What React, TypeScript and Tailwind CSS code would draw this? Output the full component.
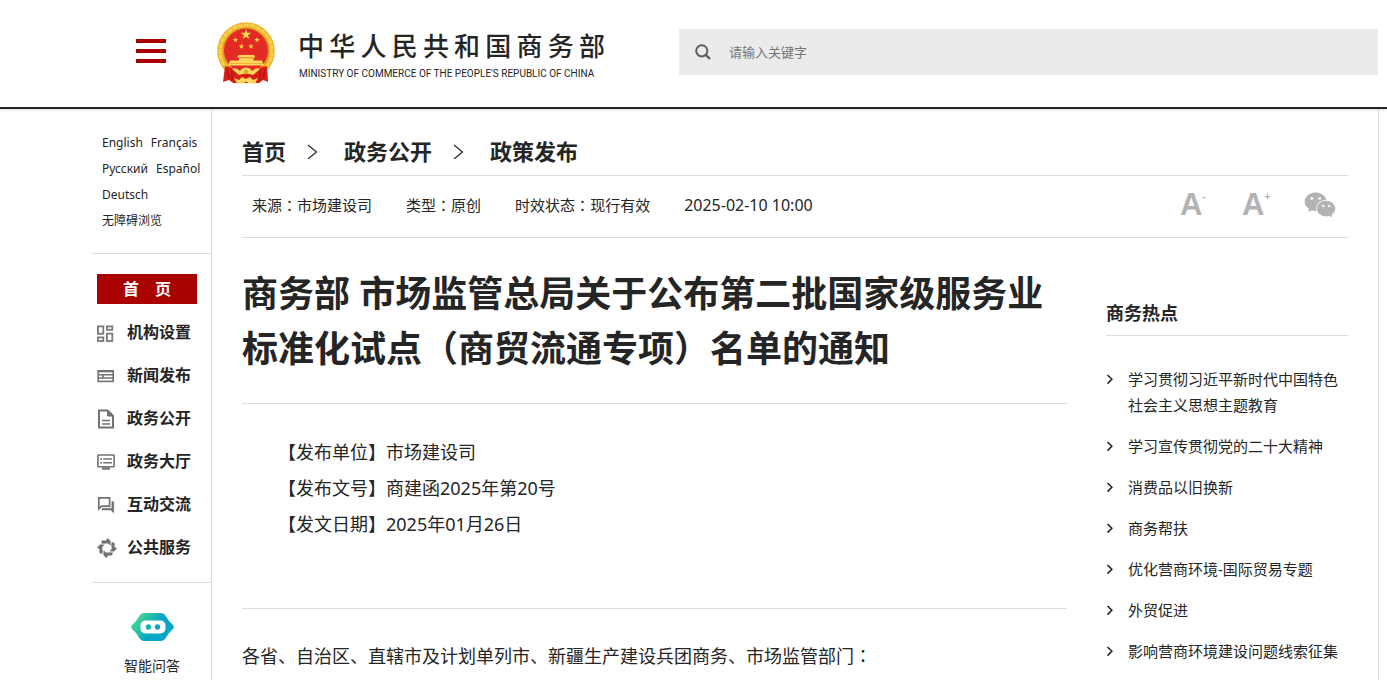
import type { ReactNode } from 'react';
import { FaWeixin } from 'react-icons/fa';

const languages = [
  { label: 'English', link: '#en' },
  { label: 'Français', link: '#fr' },
  { label: 'Русский', link: '#ru' },
  { label: 'Español', link: '#es' },
  { label: 'Deutsch', link: '#de' },
];

const navItems: { label: string; icon: ReactNode }[] = [
  {
    label: '机构设置',
    icon: (
      <svg viewBox="0 0 20 20" className="w-5 h-5" fill="none" stroke="#7a7a7a" strokeWidth="1.8">
        <rect x="0.9" y="3.4" width="5.4" height="7.4" />
        <rect x="9.9" y="3.4" width="5.4" height="3.4" />
        <rect x="0.9" y="14.4" width="5.4" height="3.6" />
        <rect x="9.9" y="10.600" width="5.4" height="7.4" />
      </svg>
    ),
  },
  {
    label: '新闻发布',
    icon: (
      <svg viewBox="0 0 20 20" className="w-5 h-5" fill="none" stroke="#727272" strokeWidth="1.6">
        <rect x="1.2" y="5" width="15" height="10.4" />
        <path d="M0.600 5.2h16.300" strokeWidth="2.2" />
        <path d="M1 8.700h15.5M1 12h15.5M6 8v4" />
      </svg>
    ),
  },
  {
    label: '政务公开',
    icon: (
      <svg viewBox="0 0 20 20" className="w-5 h-5" fill="none" stroke="#727272" strokeWidth="2">
        <path d="M2 1.500h8.5l5.5 5.5V18.500H2z" />
        <path d="M10.5 1V7h6z" fill="#727272" strokeWidth="1" />
        <path d="M5 11.500h8M5 15h8" strokeWidth="1.6" />
      </svg>
    ),
  },
  {
    label: '政务大厅',
    icon: (
      <svg viewBox="0 0 20 20" className="w-5 h-5" fill="none" stroke="#727272" strokeWidth="1.6">
        <rect x="0.9" y="3" width="16.2" height="11.8" rx="0.6" />
        <path d="M3.2 7h1.800M6.200 7H15M3.200 10.700h1.800M6.200 10.700H15" />
        <path d="M5 16.500h8" strokeWidth="2.400" />
      </svg>
    ),
  },
  {
    label: '互动交流',
    icon: (
      <svg viewBox="0 0 20 20" className="w-5 h-5" fill="none" stroke="#727272" strokeWidth="1.7">
        <path d="M1.8 2.800h10.800v8.400H4.600L1.800 13.800z" />
        <path d="M14.800 6.500h2v11.600l-3-3H5V13.200h9.800V6.500z" fill="#727272" strokeWidth="0.400" />
      </svg>
    ),
  },
  {
    label: '公共服务',
    icon: (
      <svg viewBox="0 0 20 20" className="w-5 h-5" fill="#727272">
        {[0, 90, 180, 270].map((angle) => (
          <path
            key={angle}
            transform={`rotate(${angle} 10 10)`}
            d="M10.500 0 L13.600 3 L13.400 7.400 L10.600 5.200 L6.600 5.800 L4 5.200 L5 2.400 L9 2.400Z"
          />
        ))}
      </svg>
    ),
  },
];

const crumbs = ['首页', '政务公开', '政策发布'];

const documentInfo = [
  '【发布单位】市场建设司',
  '【发布文号】商建函2025年第20号',
  '【发文日期】2025年01月26日',
];

const hotTopics = [
  '学习贯彻习近平新时代中国特色社会主义思想主题教育',
  '学习宣传贯彻党的二十大精神',
  '消费品以旧换新',
  '商务帮扶',
  '优化营商环境-国际贸易专题',
  '外贸促进',
  '影响营商环境建设问题线索征集',
];

function Star({ x, y, r }: { x: number; y: number; r: number }) {
  return (
    <path
      transform={`translate(${x} ${y}) scale(${r})`}
      d="M0-1 .23-.31H.95L.37.12.59.81 0 .38-.59.81-.37.12-.95-.31H-.23Z"
      fill="#fbd94a"
    />
  );
}

function Emblem() {
  return (
    <svg viewBox="0 0 58 62" className="w-[58px] h-[62px] shrink-0" aria-hidden="true">
      <circle cx="29" cy="29" r="28.8" fill="#eeb32e" />
      <circle cx="29" cy="29" r="26" fill="none" stroke="#f8cf4c" strokeWidth="3" strokeDasharray="5 1" />
      <circle cx="29" cy="29" r="22.800" fill="none" stroke="#d8921f" strokeWidth="1" />
      <circle cx="29" cy="28.500" r="22" fill="#e32a24" />
      <Star x={29} y={12.500} r={5.600} />
      <Star x={18.500} y={17.800} r={2.900} />
      <Star x={40} y={17.800} r={2.900} />
      <Star x={24.500} y={24.500} r={2.900} />
      <Star x={34} y={24.500} r={2.900} />
      <path d="M21.500 33h15.500l1.500 2.500h-18.500zM22 36h14.500v2.500h8.500l2 5H11l2-5h9z" fill="#fbd75a" />
      <path d="M12 41.500h34M22 35.800h15" stroke="#e6a12c" strokeWidth="0.7" />
      <path d="M8 44 Q15 45 20 49 L25 52 H33 L38 49 Q43 45 50 44 L51 60 L46 58 L42 61 H16 L12 58 L6 60Z" fill="#d91e18" />
      <path d="M10 47 L12 57 M15 48 L15 58 M48 47 L46 57 M43 48 L43 58" stroke="#a81010" strokeWidth="1" />
      <path d="M15 47 Q19 45 23 49 Q25 45.500 29 45.500 Q33 45.500 35 49 Q39 45 43 47 L36 53 L29 51 L22 53Z" fill="#fbd75a" />
      <circle cx="29" cy="49.500" r="2" fill="#e6a12c" />
      <path d="M17 56 L22 58 L25 55 L29 57 L33 55 L36 58 L41 56 L38 61.500 H32 L29 59.500 L26 61.500 H20Z" fill="#fbd75a" />
    </svg>
  );
}

function Robot() {
  return (
    <svg viewBox="0 0 43 28" className="w-[43px] h-7" aria-hidden="true">
      <defs>
        <linearGradient id="robot" x1="0" y1="0" x2="1" y2="0.5">
          <stop offset="0.1" stopColor="#4fdc83" />
          <stop offset="0.65" stopColor="#07a6c8" />
        </linearGradient>
      </defs>
      <path
        d="M13 0H30Q32.500 0 34 2L38 8 42 12Q43.500 14 42 16L38 20 34 26Q32.500 28 30 28H13Q10.500 28 9 26L5 20 1 16Q-.5 14 1 12L5 8 9 2Q10.500 0 13 0Z"
        fill="url(#robot)"
      />
      <rect x="9.500" y="7.500" width="25" height="13" rx="5" fill="#fff" />
      <circle cx="17.500" cy="14" r="2.700" fill="#14aebb" />
      <circle cx="26.500" cy="14" r="2.700" fill="#07a6c8" />
    </svg>
  );
}

// full-width colon, centred in its box
function Colon() {
  return <span className="leading-none font-['Noto_Sans_CJK_TC',sans-serif]">：</span>;
}

export default function App() {
  return (
    <div className="min-h-screen flex flex-col bg-white text-[#252525] font-['Noto_Sans','Noto_Sans_CJK_SC',sans-serif]">
      {/* Header */}
      <header className="flex items-start border-b-2 border-[#252525] h-[109px] pl-[136px] pr-[9px] shadow-sm">
        <button type="button" aria-label="菜单" className="mt-[39px] flex flex-col gap-[6px] w-[30px] shrink-0">
          <span className="h-1 w-full bg-[#a90000]" />
          <span className="h-1 w-full bg-[#a90000]" />
          <span className="h-1 w-full bg-[#a90000]" />
        </button>
        <a href="#home" className="flex ml-[51px] mt-[22px] gap-[23px] shrink-0">
          <Emblem />
          <div className="w-[307px] pt-1">
            <div className="text-[26px] leading-10 font-medium [text-align-last:justify]">
              中华人民共和国商务部
            </div>
            <div className="pl-px text-[10px] leading-4 whitespace-nowrap font-[Roboto,sans-serif]">
              MINISTRY OF COMMERCE OF THE PEOPLE'S REPUBLIC OF CHINA
            </div>
          </div>
        </a>
        <form className="flex flex-1 items-center h-[46px] mt-[29px] ml-[74px] pl-4 bg-[#ebebeb]">
          <label htmlFor="keyword" aria-label="搜索">
            <svg viewBox="0 0 16 16" className="w-4 h-4" fill="none" stroke="#5c5c5c" strokeWidth="2">
              <circle cx="6.800" cy="6.800" r="5.600" />
              <path d="M10.800 10.800 15 15" strokeWidth="2.400" />
            </svg>
          </label>
          <input
            id="keyword"
            type="text"
            placeholder="请输入关键字"
            className="flex-1 h-full ml-[18px] bg-transparent text-[13px] outline-none placeholder:text-[#757575]"
          />
        </form>
      </header>

      <div className="flex flex-1 ml-[92px] mr-2">
        {/* Sidebar */}
        <aside className="w-[120px] shrink-0 border-r border-[#dcdcdc]">
          <div className="pt-[21px] pb-[19px] pl-[10px] text-[12px] leading-[26px] border-b border-[#dcdcdc]">
            <div className="flex flex-wrap gap-x-2">
              {languages.map((language) => (
                <a key={language.label} href={language.link}>{language.label}</a>
              ))}
            </div>
            <a href="#accessible" className="block">无障碍浏览</a>
          </div>

          <nav className="pt-5 pb-[13px] pl-[5px] border-b border-[#dcdcdc] font-bold">
            <a href="#home" className="flex items-center justify-center w-[100px] h-[30px] mb-[7px] bg-[#a90000] text-white">
              首　页
            </a>
            {navItems.map((item) => (
              <a key={item.label} href="#section" className="flex items-center gap-[10px] h-[43px] whitespace-nowrap">
                {item.icon}
                <span className="pb-0.5">{item.label}</span>
              </a>
            ))}
          </nav>

          <a href="#chat" className="flex flex-col items-center pt-[30px] pl-px text-[14px]">
            <Robot />
            <span className="mt-[13px] leading-6">智能问答</span>
          </a>
        </aside>

        {/* Content */}
        <main className="flex-1 px-[30px] border-r border-[#dcdcdc]">
          <nav className="flex items-center pt-[27px] pb-[9px] text-[22px] leading-[30px] font-bold border-b border-[#dcdcdc]">
            {crumbs.map((crumb, index) => (
              <div key={crumb} className="flex items-center">
                {index > 0 && (
                  <svg viewBox="0 0 58 16" className="w-[58px] h-4" fill="none" stroke="#252525" strokeWidth="1.200">
                    <path d="M22 2 30.500 9 22 16" />
                  </svg>
                )}
                <a href="#crumb">{crumb}</a>
              </div>
            ))}
          </nav>

          <div className="flex items-center justify-between h-[62px] pb-1 pl-[10px] pr-3 border-b border-[#dcdcdc]">
            <div className="flex items-center gap-[34px] text-[15px] leading-6">
              <span>来源<Colon />市场建设司</span>
              <span>类型<Colon />原创</span>
              <span>时效状态<Colon />现行有效</span>
              <time className="text-base">2025-02-10 10:00</time>
            </div>
            <div className="flex items-center text-[#b3b3b3]">
              <button type="button" aria-label="缩小字号" className="flex w-[62px] font-['Liberation_Sans',sans-serif] font-bold">
                <span className="text-[31px] leading-8">A</span>
                <span className="text-[10px] leading-4">-</span>
              </button>
              <button type="button" aria-label="放大字号" className="flex w-[62px] font-['Liberation_Sans',sans-serif] font-bold">
                <span className="text-[31px] leading-8">A</span>
                <span className="text-[10px] leading-4">+</span>
              </button>
              <button type="button" aria-label="微信">
                <FaWeixin className="w-8 h-8" />
              </button>
            </div>
          </div>

          <div className="flex gap-[39px]">
            <article className="flex-1">
              <h1 className="pt-7 pb-[27px] text-[36px] leading-[55px] font-bold border-b border-[#dcdcdc]">
                商务部 市场监管总局关于公布第二批国家级服务业标准化试点（商贸流通专项）名单的通知
              </h1>
              <div className="pt-[30px] pb-[66px] pl-9 text-[18px] leading-9 border-b border-[#dcdcdc]">
                {documentInfo.map((line) => (
                  <p key={line}>{line}</p>
                ))}
              </div>
              <p className="pt-[29px] text-[18px] leading-9">
                各省、自治区、直辖市及计划单列市、新疆生产建设兵团商务、市场监管部门<Colon />
              </p>
            </article>

            <section className="w-[242px] shrink-0 pt-[60px]">
              <h2 className="pb-[7px] text-[18px] leading-[30px] font-bold border-b border-[#dcdcdc]">商务热点</h2>
              <ul className="mt-[30px] space-y-[15px] text-[15px] leading-[26px]">
                {hotTopics.map((topic) => (
                  <li key={topic} className="flex gap-[14px]">
                    <svg viewBox="0 0 8 26" className="w-2 h-[26px] shrink-0" fill="none" stroke="#252525" strokeWidth="1.600">
                      <path d="M1.500 9 5.800 13.300 1.500 17.600" />
                    </svg>
                    <a href="#topic">{topic}</a>
                  </li>
                ))}
              </ul>
            </section>
          </div>
        </main>
      </div>
    </div>
  );
}
